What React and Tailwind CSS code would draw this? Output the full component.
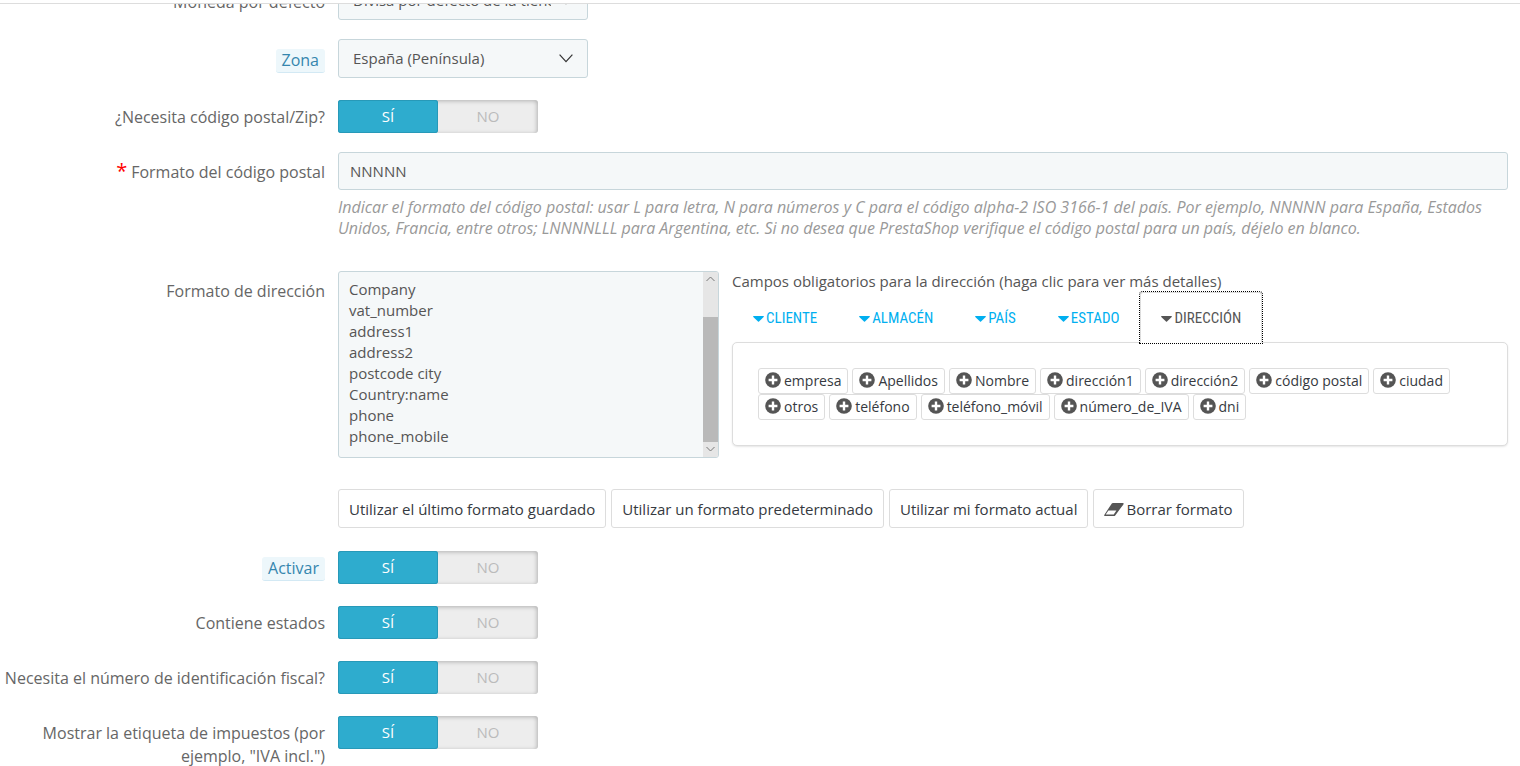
import React, { useState } from "react";

const TABS = ["CLIENTE", "ALMACÉN", "PAÍS", "ESTADO", "DIRECCIÓN"];

const ADDRESS_FIELDS = [
  "empresa",
  "Apellidos",
  "Nombre",
  "dirección1",
  "dirección2",
  "código postal",
  "ciudad",
  "otros",
  "teléfono",
  "teléfono_móvil",
  "número_de_IVA",
  "dni",
];

const DEFAULT_LAYOUT = [
  "Company",
  "vat_number",
  "address1",
  "address2",
  "postcode city",
  "Country:name",
  "phone",
  "phone_mobile",
].join("\n");

const LABEL_PADDING = {
  switch: "pt-[6px]",
  select: "pt-[10px]",
  text: "pt-[9px]",
};

const Row = ({ label, htmlFor, hint, required, control = "text", className = "", children }) => (
  <div className={`grid grid-cols-[325px_minmax(0,1fr)] gap-x-[13px] ${className}`}>
    <label
      htmlFor={htmlFor}
      className={`text-right text-base leading-[23px] text-[#666] ${LABEL_PADDING[control]}`}
    >
      {required && <span className="mr-1 text-xl leading-none text-[#f00]">*</span>}
      {hint ? (
        <span className="inline-block rounded-[3px] border-b border-[#d3e9f4] bg-[#edf7fb] px-[6px] text-[#3586ae]">
          {label}
        </span>
      ) : (
        label
      )}
    </label>
    <div className="min-w-0">{children}</div>
  </div>
);

const SelectBox = ({ id, value }) => (
  <div className="relative w-[250px]">
    <select
      id={id}
      className="block h-[39px] w-full appearance-none rounded-[3px] border border-[#c7d6db] bg-[#f5f8f9] pl-[14px] pr-[36px] text-[15px] text-[#555]"
    >
      <option>{value}</option>
    </select>
    <svg
      className="pointer-events-none absolute right-[15px] top-[15px] h-[9px] w-[14px]"
      viewBox="0 0 14 9"
      fill="none"
      stroke="#333"
      strokeWidth="1.2"
    >
      <path d="M0.6 0.6 7 7.6 13.4 0.6" />
    </svg>
  </div>
);

const YesNo = ({ name }) => {
  const [on, setOn] = useState(true);

  return (
    <div className="flex h-[33px] w-[200px] rounded-[3px] bg-[#ededed] text-[15px] shadow-[inset_-1px_1px_4px_rgba(0,0,0,0.25)]">
      {[true, false].map((value) => (
        <label
          key={String(value)}
          className={`relative flex w-1/2 items-center justify-center rounded-[3px] ${
            on === value
              ? "bg-[#2eacce] text-white shadow-[inset_0_0_0_1px_#2799b8]"
              : "text-[#bbb]"
          }`}
        >
          <input
            type="radio"
            name={name}
            checked={on === value}
            onChange={() => setOn(value)}
            className="sr-only"
          />
          {value ? "SÍ" : "NO"}
        </label>
      ))}
    </div>
  );
};

const PlusCircle = () => (
  <svg className="mb-[2px] h-4 w-4 shrink-0" viewBox="0 0 16 16">
    <circle cx="8" cy="8" r="7.8" fill="#555" />
    <path d="M8 3.6v8.8M3.6 8h8.8" stroke="#fff" strokeWidth="2.4" />
  </svg>
);

const Eraser = () => (
  <svg className="h-[13px] w-5" viewBox="0 0 20 13">
    <path
      fill="#555"
      fillRule="evenodd"
      d="M7.8 0.4Q8.2 0 8.8 0H18.6Q20.4 0 19.4 1.4L11.2 12.4Q10.7 13 10 13H1.2Q-0.5 13 0.6 11.4ZM4.4 7.6 1.7 11.6H9.7L12.4 7.6Z"
    />
  </svg>
);

const ScrollTrack = () => (
  <div className="flex w-[15px] flex-col items-center bg-[#e6e6e6]">
    <svg className="h-[14px] w-[9px] shrink-0" viewBox="0 0 9 14" fill="none" stroke="#777">
      <path d="M0.5 9 4.5 5 8.5 9" />
    </svg>
    <div className="mt-[31px] w-full flex-1 bg-[#b9b9b9]" />
    <svg className="h-[15px] w-[9px] shrink-0" viewBox="0 0 9 15" fill="none" stroke="#777">
      <path d="M0.5 5 4.5 9 8.5 5" />
    </svg>
  </div>
);

const AddressFields = () => {
  const [active, setActive] = useState("DIRECCIÓN");

  return (
    <div className="min-w-0 flex-1">
      <p className="text-[15px] leading-[21px] text-[#555]">
        Campos obligatorios para la dirección (haga clic para ver más detalles)
      </p>
      <div className="relative z-10 flex" role="tablist">
        {TABS.map((tab) => (
          <button
            key={tab}
            type="button"
            role="tab"
            aria-selected={tab === active}
            onClick={() => setActive(tab)}
            className={`flex h-[51px] items-center gap-[2px] rounded-t-[3px] border px-5 pt-[2px] font-['Ubuntu_Condensed','Roboto_Condensed','Open_Sans',sans-serif] text-[15px] ${
              tab === active
                ? "border-[#ddd] border-b-white bg-white text-[#555] outline-1 outline-dotted outline-black"
                : "border-transparent text-[#00aff0]"
            }`}
          >
            <svg className="h-[6px] w-[11px]" viewBox="0 0 11 6" fill="currentColor">
              <path d="M0.6 0H10.4Q11.2 0.2 10.7 0.9L6 5.6Q5.5 6 5 5.6L0.3 0.9Q-0.2 0.2 0.6 0Z" />
            </svg>
            {tab}
          </button>
        ))}
      </div>
      <div className="-mt-px flex flex-wrap content-start gap-x-1 rounded-[5px] border border-[#ddd] bg-white px-[25px] pb-[25px] pt-[25px] shadow-[0_1px_2px_rgba(0,0,0,0.1)]">
        {ADDRESS_FIELDS.map((field) => (
          <button
            key={field}
            type="button"
            className="flex h-[26px] items-center gap-[3px] rounded-[3px] border border-[#ddd] bg-white px-[6px] text-sm text-[#363a41]"
          >
            <PlusCircle />
            {field}
          </button>
        ))}
      </div>
    </div>
  );
};

const ActionButton = ({ icon, children }) => (
  <button
    type="button"
    className="flex h-[39px] items-center gap-[2px] whitespace-nowrap rounded-[3px] border border-[#ddd] bg-white px-[10px] pt-px text-[15px] text-[#363a41]"
  >
    {icon}
    {children}
  </button>
);

export default function App() {
  const [zipFormat, setZipFormat] = useState("NNNNN");
  const [layout, setLayout] = useState(DEFAULT_LAYOUT);

  return (
    <div className="h-screen overflow-hidden bg-white font-['Open_Sans',sans-serif]">
      <header className="relative z-20 h-1 border-b border-[#ddd] bg-white" />

      {/* the form continues under the page header */}
      <form className="-mt-[23px] pr-3">
        <Row label="Moneda por defecto" htmlFor="currency" control="select">
          <SelectBox id="currency" value="Divisa por defecto de la tienda" />
        </Row>

        <Row label="Zona" htmlFor="zone" hint control="select" className="mt-[19px]">
          <SelectBox id="zone" value="España (Península)" />
        </Row>

        <Row label="¿Necesita código postal/Zip?" control="switch" className="mt-[22px]">
          <YesNo name="need_zip" />
        </Row>

        <Row label="Formato del código postal" htmlFor="zip" required className="mt-[19px]">
          <input
            id="zip"
            type="text"
            value={zipFormat}
            onChange={(e) => setZipFormat(e.target.value)}
            className="block h-[38px] w-full rounded-[3px] border border-[#c7d6db] bg-[#f5f8f9] px-[11px] text-[15px] text-[#555]"
          />
          <p className="mt-[7px] text-base italic leading-[21px] text-[#999]">
            Indicar el formato del código postal: usar L para letra, N para números y C para el
            código alpha-2 ISO 3166-1 del país. Por ejemplo, NNNNN para España, Estados Unidos,
            Francia, entre otros; LNNNNLLL para Argentina, etc. Si no desea que PrestaShop verifique
            el código postal para un país, déjelo en blanco.
          </p>
        </Row>

        <Row label="Formato de dirección" htmlFor="layout" className="mt-8">
          <div className="flex items-start gap-[13px]">
            <div className="flex h-[187px] w-[381px] shrink-0 overflow-hidden rounded-[3px] border border-[#c7d6db] bg-[#f5f8f9]">
              <textarea
                id="layout"
                value={layout}
                onChange={(e) => setLayout(e.target.value)}
                className="min-w-0 flex-1 resize-none overflow-hidden px-[10px] pt-[7px] text-[15px] leading-[21px] text-[#555]"
              />
              <ScrollTrack />
            </div>
            <AddressFields />
          </div>
          <div className="mt-[31px] flex flex-wrap gap-x-[5px] gap-y-1">
            <ActionButton>Utilizar el último formato guardado</ActionButton>
            <ActionButton>Utilizar un formato predeterminado</ActionButton>
            <ActionButton>Utilizar mi formato actual</ActionButton>
            <ActionButton icon={<Eraser />}>Borrar formato</ActionButton>
          </div>
        </Row>

        <Row label="Activar" hint control="switch" className="mt-[23px]">
          <YesNo name="active" />
        </Row>

        <Row label="Contiene estados" control="switch" className="mt-[22px]">
          <YesNo name="contains_states" />
        </Row>

        <Row
          label="Necesita el número de identificación fiscal?"
          control="switch"
          className="mt-[22px]"
        >
          <YesNo name="need_identification_number" />
        </Row>

        <Row
          label={'Mostrar la etiqueta de impuestos (por ejemplo, "IVA incl.")'}
          control="switch"
          className="mt-[22px]"
        >
          <YesNo name="display_tax_label" />
        </Row>
      </form>
    </div>
  );
}
